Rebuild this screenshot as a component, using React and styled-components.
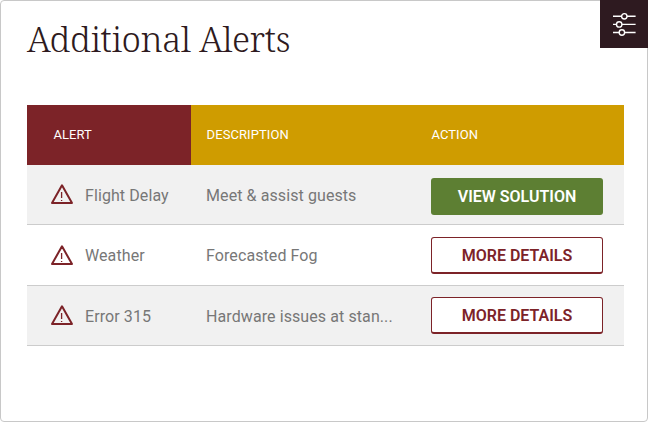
import React from "react";
import styled, { createGlobalStyle } from "styled-components";

const Global = createGlobalStyle`
  * { box-sizing: border-box; }
  body { margin: 0; background: #fff; font-family: Roboto, "Liberation Sans", sans-serif; }
`;
const Card = styled.main`
  width: 648px; height: 422px; border: 1px solid #c8c8c8; border-radius: 4px; background: #fff;
`;
const Header = styled.header`
  display: flex; justify-content: space-between; height: 104px; margin: -1px -1px 0 0; padding-left: 26px;
`;
const Title = styled.h1`
  margin: 15px 0 0; font: 300 35px/48px "Roboto Slab", "Noto Serif", "DejaVu Serif", serif;
  color: #2e1a20; height: 48px; white-space: nowrap; letter-spacing: -0.41px;
`;
const FilterButton = styled.button`
  width: 48px; height: 48px; border: 0; padding: 0; background: #2e1a20; display: grid; place-items: center;
`;
const Table = styled.section`
  width: 597px; margin: 1px 0 0 26px;
`;
const HeadRow = styled.div`
  display: grid; grid-template-columns: 164px 225px 1fr; height: 60px; background: #cf9c00;
`;
const HeadCell = styled.div`
  display: flex; align-items: center; padding: 0 0 2px ${(p) => p.$indent}px;
  background: ${(p) => p.$bg || "transparent"}; color: #fff; font-size: 13px; letter-spacing: 0.08px;
`;
const Row = styled.div`
  display: grid; grid-template-columns: 58px 121px 225px 172px; align-items: start;
  height: ${(p) => p.$height}px; background: ${(p) => p.$bg}; border-bottom: 1px solid #ccc;
`;
const Icon = styled.svg`
  display: block; margin: ${(p) => p.$top}px 0 0 23px;
`;
const Text = styled.span`
  margin-top: 21px;
  color: #777; font-size: 16px; line-height: 20px; white-space: nowrap; letter-spacing: 0.09px;
`;
const Action = styled.button`
  height: 37px; margin: ${(p) => p.$top}px 0 0; padding: ${(p) => (p.$solid ? 0 : 1)}px 0 0;
  border: ${(p) => (p.$solid ? "0" : "1px solid #7c2328")};
  border-bottom-width: ${(p) => (p.$solid ? 0 : 2)}px;
  border-radius: 3px; background: ${(p) => (p.$solid ? "#5d7f33" : "#fff")};
  color: ${(p) => (p.$solid ? "#fff" : "#7c2328")}; font: 600 16px/20px Roboto, sans-serif;
`;
const rows = [
  { name: "Flight Delay", text: "Meet & assist guests", action: "VIEW SOLUTION", height: 60, icon: 18, button: 13 },
  { name: "Weather", text: "Forecasted Fog", action: "MORE DETAILS", height: 61, icon: 19, button: 12 },
  { name: "Error 315", text: "Hardware issues at stan...", action: "MORE DETAILS", height: 60, icon: 18, button: 11 },
];

export default function App() {
  return (
    <>
      <Global />
      <Card>
        <Header>
          <Title>Additional Alerts</Title>
          <FilterButton aria-label="Filters">
            <svg width="24" height="24" fill="none" stroke="#fff" strokeWidth="1.4">
              <path d="M1 4.3H23.6M1 12.4H23.6M1 20.5H23.6" />
              <g fill="#2e1a20">
                <circle cx="12.3" cy="4.3" r="2.7" />
                <circle cx="7.2" cy="12.4" r="2.7" />
                <circle cx="9.9" cy="20.5" r="2.7" />
              </g>
            </svg>
          </FilterButton>
        </Header>
        <Table>
          <HeadRow>
            <HeadCell $indent={26.4} $bg="#7c2328">ALERT</HeadCell>
            <HeadCell $indent={15.6}>DESCRIPTION</HeadCell>
            <HeadCell $indent={15.4}>ACTION</HeadCell>
          </HeadRow>
          {rows.map((row, i) => (
            <Row key={row.name} $height={row.height} $bg={i % 2 ? "#fff" : "#f1f1f1"}>
              <Icon $top={row.icon} width="24" height="22" fill="none" stroke="#7c2328" strokeWidth="2">
                <path d="M12 2.3L22 20H2Z" strokeLinejoin="round" />
                <path d="M11.6 9V15M11.6 16.9V18" strokeWidth="1.3" />
              </Icon>
              <Text>{row.name}</Text>
              <Text>{row.text}</Text>
              <Action $top={row.button} $solid={i === 0}>{row.action}</Action>
            </Row>
          ))}
        </Table>
      </Card>
    </>
  );
}
